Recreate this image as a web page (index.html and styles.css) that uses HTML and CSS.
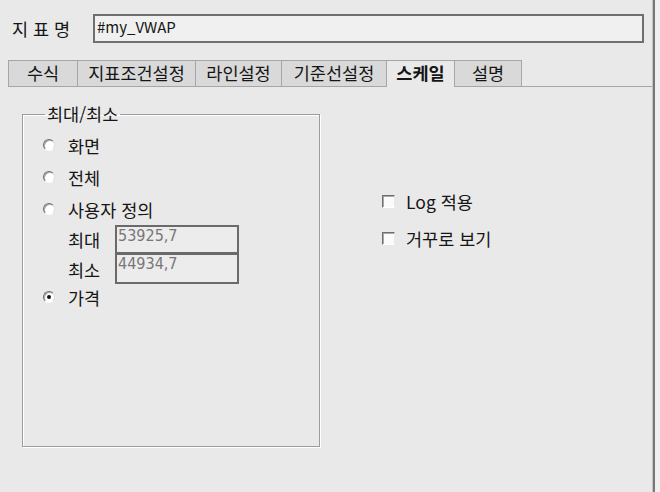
FILE: index.html
```html
<!DOCTYPE html>
<html lang="ko">
<head>
<meta charset="utf-8">
<link rel="stylesheet" href="styles.css">
</head>
<body>
<div class="frame">
  <div class="header">
    <span class="name-label">지 표 명</span>
    <div class="name-input">#my_VWAP</div>
  </div>
  <div class="tabs">
    <div class="tab t1">수식</div>
    <div class="tab t2">지표조건설정</div>
    <div class="tab t3">라인설정</div>
    <div class="tab t4">기준선설정</div>
    <div class="tab t5 active">스케일</div>
    <div class="tab t6">설명</div>
    <div class="tab-fill"></div>
  </div>
  <div class="content">
    <fieldset class="group">
      <legend>최대/최소</legend>
      <div class="row"><span class="radio"></span><span>화면</span></div>
      <div class="row"><span class="radio"></span><span>전체</span></div>
      <div class="row"><span class="radio"></span><span>사용자 정의</span></div>
      <div class="range">
        <div class="range-row"><span class="range-label">최대</span><div class="num">53925,7</div></div>
        <div class="range-row second"><span class="range-label">최소</span><div class="num">44934,7</div></div>
      </div>
      <div class="row last"><span class="radio checked"></span><span>가격</span></div>
    </fieldset>
    <div class="options">
      <div class="check-row"><span class="check"></span><span>Log 적용</span></div>
      <div class="check-row"><span class="check"></span><span>거꾸로 보기</span></div>
    </div>
  </div>
</div>
</body>
</html>
```

FILE: styles.css
```css
html, body {
  margin: 0;
  padding: 0;
  background: #f0f0f0;
}
body {
  width: 660px;
  height: 492px;
  overflow: hidden;
  font-family: "Noto Sans CJK KR", "Noto Sans", sans-serif;
  font-size: 17.5px;
  color: #151515;
}
.frame {
  width: 652px;
  height: 492px;
  background: #e9e9e9;
  border-right: 1px solid #c4c4c4;
  box-shadow: 2px 0 0 #777;
  box-sizing: content-box;
}
.header {
  display: flex;
  align-items: center;
  padding: 14px 0 0 12px;
  height: 29px;
}
.name-label {
  width: 81px;
  line-height: 29px;
}
.name-input {
  width: 545px;
  height: 25px;
  border: 2px solid #6f6f6f;
  background: #f0f0f0;
  font-size: 15px;
  line-height: 22px;
  padding-left: 2px;
  box-sizing: content-box;
}
.tabs {
  display: flex;
  margin-top: 17px;
  padding-left: 8px;
  height: 27px;
}
.tab {
  box-sizing: border-box;
  height: 27px;
  background: #d9d9d9;
  border: 1px solid #a6a6a6;
  border-right: none;
  text-align: center;
  line-height: 24px;
}
.tab.t6 { border-right: 1px solid #a6a6a6; }
.t1 { width: 69px; }
.t2 { width: 118px; }
.t3 { width: 86px; }
.t4 { width: 105px; }
.t5 { width: 68px; }
.t6 { width: 68px; }
.tab.active {
  background: #e9e9e9;
  border-bottom: none;
  font-weight: bold;
}
.tab-fill {
  flex: 1;
  border-bottom: 1px solid #a6a6a6;
}
.content {
  display: flex;
  align-items: flex-start;
}
.group {
  margin: 16px 0 0 22px;
  padding: 4px 0 0 20px;
  width: 298px;
  height: 344px;
  box-sizing: border-box;
  border: 1px solid #9c9c9c;
  box-shadow: 1px 1px 0 #fff, inset 1px 1px 0 #fff;
}
.group legend {
  padding: 0 2px;
  margin-left: 2px;
  line-height: 22px;
}
.row {
  display: flex;
  align-items: center;
  height: 32px;
}
.row.last {
  height: 26px;
}
.radio {
  width: 12px;
  height: 12px;
  box-sizing: border-box;
  border-radius: 50%;
  background: #fff;
  border: 1px solid;
  border-color: #6e6e6e #dcdcdc #ffffff #6e6e6e;
  box-shadow: inset 1px 1px 0 #a8a8a8;
  margin-right: 13px;
  position: relative;
}
.radio.checked::after {
  content: "";
  position: absolute;
  left: 3px;
  top: 3px;
  width: 4px;
  height: 4px;
  border-radius: 50%;
  background: #111;
}
.range {
  padding-left: 25px;
}
.range-row {
  display: flex;
  align-items: center;
}
.range-label {
  width: 47px;
}
.num {
  width: 124px;
  height: 29px;
  box-sizing: border-box;
  border: 2px solid #6a6a6a;
  background: #ececec;
  color: #777;
  font-family: "DejaVu Sans Condensed", "DejaVu Sans", sans-serif;
  font-stretch: condensed;
  font-size: 16px;
  line-height: 18px;
  padding-left: 1px;
}
.range-row.second .num {
  height: 30px;
  border-top-width: 1px;
}
.options {
  margin: 96px 0 0 62px;
  display: flex;
  flex-direction: column;
}
.check-row {
  display: flex;
  align-items: center;
  height: 37px;
}
.check {
  width: 13px;
  height: 13px;
  box-sizing: border-box;
  background: #fbfbfb;
  border: 1px solid;
  border-color: #6e6e6e #e8e8e8 #ffffff #6e6e6e;
  box-shadow: inset 1px 1px 0 #a8a8a8;
  margin-right: 11px;
}
```
